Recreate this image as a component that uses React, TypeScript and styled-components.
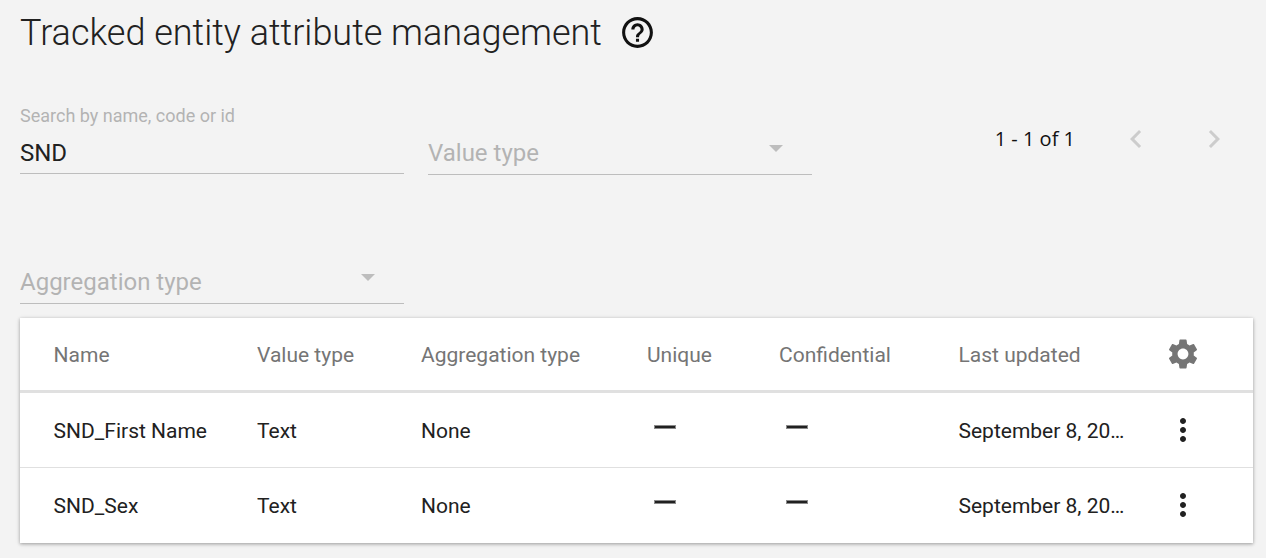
import React from 'react';
import styled, { createGlobalStyle } from 'styled-components';
import { MdHelpOutline, MdChevronLeft, MdChevronRight, MdSettings, MdMoreVert } from 'react-icons/md';

const GlobalStyle = createGlobalStyle`
  html, body {
    margin: 0;
    padding: 0;
    background: #f3f3f3;
    font-family: Roboto, "Liberation Sans", sans-serif;
    overflow: hidden;
  }
`;

const Page = styled.div`
  width: 1266px;
  height: 558px;
  padding: 0 13px 0 20px;
  box-sizing: border-box;
`;

const Heading = styled.div`
  display: flex;
  align-items: center;
  height: 66px;
  gap: 17px;
`;

const Title = styled.h1`
  margin: 0;
  font-size: 36px;
  font-weight: 300;
  color: #212121;
  white-space: nowrap;
`;

const HelpIcon = styled(MdHelpOutline)`
  font-size: 37px;
  color: #111;
  margin-bottom: 2px;
`;

const Toolbar = styled.div`
  display: flex;
  justify-content: space-between;
  align-items: flex-start;
  height: 252px;
`;

const Filters = styled.div`
  display: grid;
  grid-template-columns: 384px 384px;
  column-gap: 24px;
  grid-auto-rows: 130px;
  padding-top: 34px;
`;

const Field = styled.div<{ $shift?: number }>`
  position: relative;
  height: 74px;
  box-sizing: border-box;
  border-bottom: 1px solid #bdbdbd;
  margin-top: ${({ $shift }) => $shift ?? 0}px;
`;

const FloatLabel = styled.div`
  font-size: 18px;
  line-height: 24px;
  color: #b3b3b3;
  padding-top: 4px;
`;

const FieldValue = styled.div`
  font-size: 24px;
  line-height: 30px;
  color: #212121;
  padding-top: 10px;
`;

const Placeholder = styled.div`
  font-size: 24px;
  line-height: 30px;
  color: #b3b3b3;
  padding-top: 37px;
`;

const Caret = styled.span`
  position: absolute;
  right: 29px;
  top: 44px;
  width: 0;
  height: 0;
  border-left: 7.5px solid transparent;
  border-right: 7.5px solid transparent;
  border-top: 7.5px solid #bdbdbd;
`;

const Pager = styled.div`
  display: flex;
  align-items: center;
  height: 30px;
  margin-top: 57px;
  padding-right: 21px;
`;

const PagerText = styled.span`
  font-family: "Open Sans", sans-serif;
  font-size: 20px;
  color: #111;
  margin-right: 43px;
`;

const PagerButton = styled.span`
  display: flex;
  justify-content: center;
  width: 36px;
  padding-top: 2px;
  font-size: 36px;
  color: #cccccc;
  & + & {
    margin-left: 42px;
  }
`;

const Card = styled.div`
  background: #fff;
  box-shadow: 0 1px 5px rgba(0, 0, 0, 0.14), 0 1px 3px rgba(0, 0, 0, 0.26);
  height: 225px;
`;

const Row = styled.div<{ $head?: boolean; $last?: boolean }>`
  display: grid;
  grid-template-columns: 237px 164px 226px 132px 179.5px 209.5px 1fr;
  align-items: center;
  height: ${({ $last }) => ($last ? 74 : 75)}px;
  box-sizing: border-box;
  border-bottom: ${({ $head, $last }) => ($head ? '3px solid #e0e0e0' : $last ? 'none' : '1px solid #e0e0e0')};
  font-size: 21px;
  color: ${({ $head }) => ($head ? '#757575' : '#212121')};
`;

const Cell = styled.div<{ $trim?: boolean; $nudge?: boolean }>`
  white-space: nowrap;
  overflow: hidden;
  text-overflow: ellipsis;
  padding-top: ${({ $nudge }) => ($nudge ? 2 : 0)}px;
  padding-right: ${({ $trim }) => ($trim ? 43 : 0)}px;
  &:first-child {
    padding-left: 33.6px;
  }
`;

const Dash = styled.span`
  display: block;
  width: 22px;
  height: 4px;
  margin: 0 0 6px 7px;
  box-sizing: border-box;
  background: #212121;
  border: 1px solid #8a8a8a;
`;

const ActionCell = styled.div<{ $gear?: boolean }>`
  display: flex;
  margin-left: -3px;
  font-size: 36px;
  color: ${({ $gear }) => ($gear ? '#757575' : '#212121')};
`;

const rows = [
  { name: 'SND_First Name' },
  { name: 'SND_Sex' },
];

const columns = ['Name', 'Value type', 'Aggregation type', 'Unique', 'Confidential', 'Last updated'];

export default function App() {
  return (
    <Page>
      <GlobalStyle />
      <Heading>
        <Title>Tracked entity attribute management</Title>
        <HelpIcon />
      </Heading>
      <Toolbar>
        <Filters>
          <Field>
            <FloatLabel>Search by name, code or id</FloatLabel>
            <FieldValue>SND</FieldValue>
          </Field>
          <Field $shift={1}>
            <Placeholder>Value type</Placeholder>
            <Caret />
          </Field>
          <Field>
            <Placeholder>Aggregation type</Placeholder>
            <Caret />
          </Field>
        </Filters>
        <Pager>
          <PagerText>1 - 1 of 1</PagerText>
          <PagerButton><MdChevronLeft /></PagerButton>
          <PagerButton><MdChevronRight /></PagerButton>
        </Pager>
      </Toolbar>
      <Card>
        <Row $head>
          {columns.map((col) => (
            <Cell key={col} $nudge>{col}</Cell>
          ))}
          <ActionCell $gear><MdSettings /></ActionCell>
        </Row>
        {rows.map((row, i) => (
          <Row key={row.name} $last={i === rows.length - 1}>
            <Cell $nudge>{row.name}</Cell>
            <Cell $nudge>Text</Cell>
            <Cell $nudge>None</Cell>
            <Cell><Dash /></Cell>
            <Cell><Dash /></Cell>
            <Cell $trim $nudge>September 8, 2022</Cell>
            <ActionCell><MdMoreVert /></ActionCell>
          </Row>
        ))}
      </Card>
    </Page>
  );
}
